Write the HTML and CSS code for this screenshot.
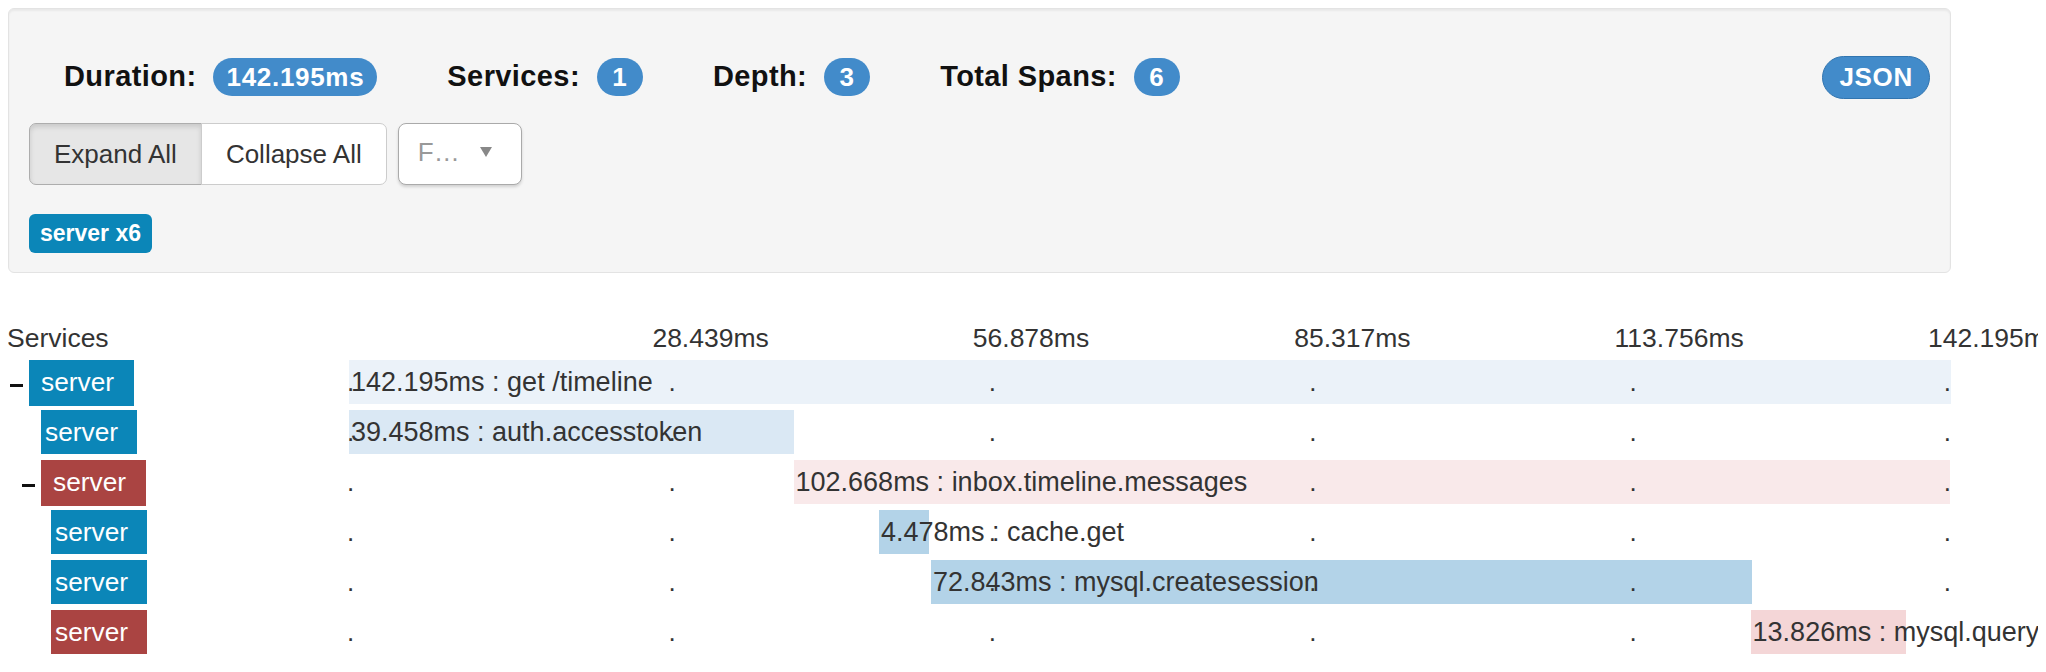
FILE: index.html
```html
<!DOCTYPE html>
<html lang="en">
<head>
<meta charset="utf-8">
<title>Trace</title>
<link rel="stylesheet" href="styles.css">
</head>
<body>
<div class="page">
  <div class="well">
    <div class="stats">
      <div class="stat"><strong class="stat-label">Duration:</strong><span class="badge">142.195ms</span></div>
      <div class="stat"><strong class="stat-label">Services:</strong><span class="badge">1</span></div>
      <div class="stat"><strong class="stat-label">Depth:</strong><span class="badge">3</span></div>
      <div class="stat"><strong class="stat-label">Total Spans:</strong><span class="badge">6</span></div>
      <button class="json-btn" type="button">JSON</button>
    </div>
    <div class="controls">
      <div class="btn-group">
        <button class="btn active" type="button">Expand All</button>
        <button class="btn" type="button">Collapse All</button>
      </div>
      <div class="chosen">
        <span class="chosen-text">Filter Service</span>
        <span class="chosen-arrow"></span>
      </div>
    </div>
    <div class="svc-tags"><span class="svc-tag">server x6</span></div>
  </div>

  <div class="trace">
    <div class="trace-row head">
      <div class="svc-col">Services</div>
      <div class="tl-col">
        <span class="tick-label l1">28.439ms</span>
        <span class="tick-label l2">56.878ms</span>
        <span class="tick-label l3">85.317ms</span>
        <span class="tick-label l4">113.756ms</span>
        <span class="tick-label l5">142.195ms</span>
      </div>
    </div>

    <div class="trace-row">
      <div class="svc-col d0t"><span class="toggle"></span><span class="svc blue has-kids">server</span></div>
      <div class="tl-col">
        <div class="bar c1" style="left:0%;width:100%">142.195ms : get /timeline</div>
        <span class="dot p0">.</span><span class="dot p1">.</span><span class="dot p2">.</span><span class="dot p3">.</span><span class="dot p4">.</span><span class="dot p5">.</span>
      </div>
    </div>

    <div class="trace-row">
      <div class="svc-col d1"><span class="svc blue">server</span></div>
      <div class="tl-col">
        <div class="bar c2" style="left:0%;width:27.749%">39.458ms : auth.accesstoken</div>
        <span class="dot p0">.</span><span class="dot p1">.</span><span class="dot p2">.</span><span class="dot p3">.</span><span class="dot p4">.</span><span class="dot p5">.</span>
      </div>
    </div>

    <div class="trace-row">
      <div class="svc-col d1t"><span class="toggle"></span><span class="svc red has-kids">server</span></div>
      <div class="tl-col">
        <div class="bar c3" style="left:27.749%;width:72.202%">102.668ms : inbox.timeline.messages</div>
        <span class="dot p0">.</span><span class="dot p1">.</span><span class="dot p2">.</span><span class="dot p3">.</span><span class="dot p4">.</span><span class="dot p5">.</span>
      </div>
    </div>

    <div class="trace-row">
      <div class="svc-col d2"><span class="svc blue">server</span></div>
      <div class="tl-col">
        <div class="bar c4" style="left:33.08%;width:3.149%">4.478ms : cache.get</div>
        <span class="dot p0">.</span><span class="dot p1">.</span><span class="dot p2">.</span><span class="dot p3">.</span><span class="dot p4">.</span><span class="dot p5">.</span>
      </div>
    </div>

    <div class="trace-row">
      <div class="svc-col d2"><span class="svc blue">server</span></div>
      <div class="tl-col">
        <div class="bar c4" style="left:36.33%;width:51.227%">72.843ms : mysql.createsession</div>
        <span class="dot p0">.</span><span class="dot p1">.</span><span class="dot p2">.</span><span class="dot p3">.</span><span class="dot p4">.</span><span class="dot p5">.</span>
      </div>
    </div>

    <div class="trace-row">
      <div class="svc-col d2"><span class="svc red">server</span></div>
      <div class="tl-col">
        <div class="bar c6" style="left:87.49%;width:9.723%">13.826ms : mysql.query</div>
        <span class="dot p0">.</span><span class="dot p1">.</span><span class="dot p2">.</span><span class="dot p3">.</span><span class="dot p4">.</span><span class="dot p5">.</span>
      </div>
    </div>
  </div>
</div>
</body>
</html>
```

FILE: styles.css
```css
html, body {
  padding: 0;
}
body {
  margin: 8px;
  font-family: "Liberation Sans", Arial, Helvetica, sans-serif;
  color: #333;
  background: #fff;
  overflow-x: hidden;
}
.page {
  width: 1943px;
}

/* summary panel */
.well {
  background: #f5f5f5;
  border: 1px solid #e3e3e3;
  border-radius: 6px;
  box-shadow: inset 0 2px 2px rgba(0, 0, 0, 0.05);
  padding: 20px 20px 19px;
}
.stats {
  display: flex;
  align-items: baseline;
  margin-top: 27px;
  padding-left: 35px;
}
.stat {
  display: flex;
  align-items: baseline;
  gap: 17px;
  margin-right: 70px;
}
.stat-label {
  font-size: 29px;
  font-weight: 700;
  letter-spacing: 0.4px;
  color: #111;
}
.badge {
  display: inline-block;
  box-sizing: border-box;
  min-width: 46px;
  height: 38px;
  line-height: 38px;
  padding: 0 13px;
  border-radius: 19px;
  background: #428bca;
  color: #fff;
  font-size: 26px;
  font-weight: 700;
  letter-spacing: 0.7px;
  text-align: center;
}
.json-btn {
  margin-left: auto;
  height: 43px;
  line-height: 41px;
  padding: 0 16px;
  border: 1px solid #3175b0;
  border-radius: 22px;
  background: #428bca;
  color: #fff;
  font-family: inherit;
  font-size: 26px;
  font-weight: 700;
  letter-spacing: 0.7px;
}

.controls {
  display: flex;
  align-items: flex-start;
  margin-top: 24px;
}
.btn-group {
  display: flex;
}
.btn {
  height: 62px;
  line-height: 60px;
  padding: 0 24px;
  font-family: inherit;
  font-size: 26px;
  color: #333;
  background: #fff;
  border: 1px solid #ccc;
}
.btn:first-child {
  border-radius: 7px 0 0 7px;
}
.btn:last-child {
  border-radius: 0 7px 7px 0;
  margin-left: -1px;
}
.btn.active {
  background: #e6e6e6;
  border-color: #adadad;
  box-shadow: inset 0 3px 5px rgba(0, 0, 0, 0.125);
}
.chosen {
  display: flex;
  align-items: center;
  box-sizing: border-box;
  width: 124px;
  height: 62px;
  margin-left: 11px;
  padding: 0 0 4px 19px;
  background: #fff;
  border: 1px solid #aaa;
  border-radius: 8px;
  box-shadow: 0 2px 3px rgba(0, 0, 0, 0.15);
}
.chosen-text {
  width: 46px;
  overflow: hidden;
  white-space: nowrap;
  text-overflow: ellipsis;
  font-size: 26px;
  color: #999;
}
.chosen-arrow {
  margin-left: 16px;
  width: 0;
  height: 0;
  border-left: 6px solid transparent;
  border-right: 6px solid transparent;
  border-top: 10px solid #888;
}
.svc-tags {
  display: flex;
  margin-top: 29px;
}
.svc-tag {
  height: 39px;
  line-height: 39px;
  padding: 0 11px;
  border-radius: 6px;
  background: #0b86b8;
  color: #fff;
  font-size: 23px;
  font-weight: 700;
}

/* trace timeline */
.trace {
  margin-top: 50px;
}
.trace-row {
  display: grid;
  grid-template-columns: 341px 1602px;
  height: 50px;
}
.trace-row.head {
  height: 37px;
  line-height: 30px;
  font-size: 26.5px;
}
.head .svc-col {
  margin-left: -1px;
}
.svc-col {
  display: flex;
  align-items: flex-start;
}
.svc-col.d0t { padding-left: 2px; }
.svc-col.d1t { padding-left: 14px; }
.svc-col.d1 { padding-left: 33px; }
.svc-col.d2 { padding-left: 43px; }

.toggle {
  flex: none;
  width: 13px;
  height: 3px;
  margin: 24px 6px 0 0;
  background: #111;
}
.svc {
  height: 44px;
  line-height: 44px;
  padding: 0 19px 0 4px;
  font-size: 26.3px;
  color: #fff;
}
.svc.has-kids {
  height: 46px;
  line-height: 45px;
  padding: 0 20px 0 12px;
}
.svc.blue { background: #0b86b8; }
.svc.red { background: #aa4442; }

.tl-col {
  position: relative;
}
.tick-label {
  position: absolute;
  top: 0;
  white-space: nowrap;
}
.tick-label.l1 { left: calc(20% - 17px); }
.tick-label.l2 { left: calc(40% - 17px); }
.tick-label.l3 { left: calc(60% - 16px); }
.tick-label.l4 { left: calc(80% - 16px); }
.tick-label.l5 { left: calc(100% - 23px); }

.bar {
  position: absolute;
  top: 0;
  box-sizing: border-box;
  height: 44px;
  line-height: 44px;
  padding-left: 2px;
  font-size: 27px;
  color: #333;
  white-space: nowrap;
}
.bar.c1 { background: #ebf2f9; }
.bar.c2 { background: #dae8f4; }
.bar.c3 { background: #f9e9ea; }
.bar.c4 { background: #b3d3e8; }
.bar.c6 { background: #f4d6d7; }

.dot {
  position: absolute;
  top: 0;
  line-height: 44px;
  font-size: 26px;
  color: #333;
}
.dot.p0 { left: -2px; }
.dot.p1 { left: calc(20% - 1px); }
.dot.p2 { left: calc(40% - 1px); }
.dot.p3 { left: calc(60% - 1px); }
.dot.p4 { left: calc(80% - 1px); }
.dot.p5 { right: 0; }
```
